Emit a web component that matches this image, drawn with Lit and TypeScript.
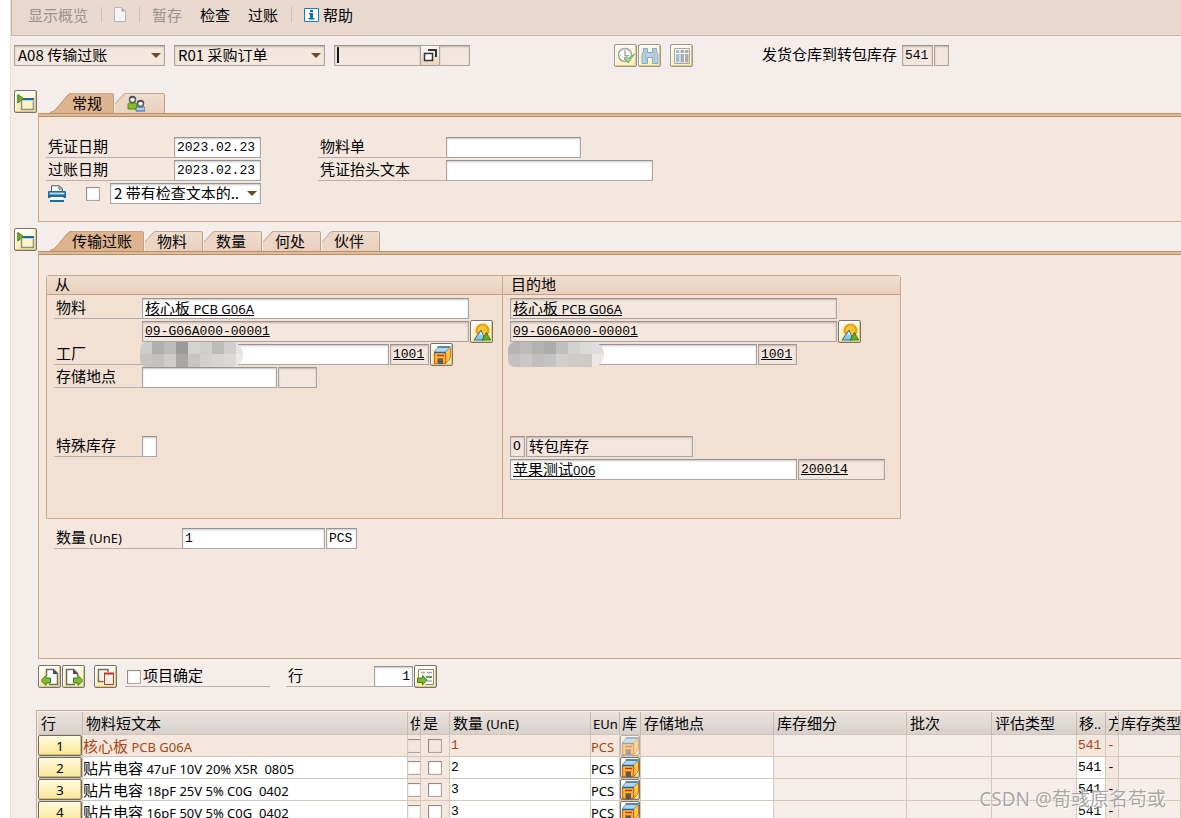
import { LitElement, html, css, svg, nothing } from "lit";
import type { TemplateResult } from "lit";
import { customElement } from "lit/decorators.js";
import { classMap } from "lit/directives/class-map.js";
import { styleMap } from "lit/directives/style-map.js";

interface FieldOptions {
  value?: string;
  label: string;
  id?: string;
  readonly?: boolean;
  link?: boolean;
  mixed?: boolean;
  right?: boolean;
  flush?: boolean;
  active?: boolean;
}

interface Item {
  no: number;
  text: string;
  qty: string;
  locked: boolean;
}

const ITEMS: Item[] = [
  { no: 1, text: "核心板 PCB G06A", qty: "1", locked: true },
  { no: 2, text: "贴片电容 47uF 10V 20% X5R  0805", qty: "2", locked: false },
  { no: 3, text: "贴片电容 18pF 25V 5% C0G  0402", qty: "3", locked: false },
  { no: 4, text: "贴片电容 16pF 50V 5% C0G  0402", qty: "3", locked: false },
];

const COLUMNS: { title: string; width: number }[] = [
  { title: "行", width: 45 },
  { title: "物料短文本", width: 325 },
  { title: "供", width: 13 },
  { title: "是", width: 29 },
  { title: "数量 (UnE)", width: 141 },
  { title: "EUn", width: 29 },
  { title: "库", width: 21 },
  { title: "存储地点", width: 133 },
  { title: "库存细分", width: 133 },
  { title: "批次", width: 85 },
  { title: "评估类型", width: 85 },
  { title: "移..", width: 29 },
  { title: "方", width: 13 },
  { title: "库存类型", width: 0 },
];

/* Latin runs are set smaller than the Chinese text around them. */
const mixed = (text: string) =>
  text
    .split(/([\x20-\x7e]+)/)
    .filter((part) => part !== "")
    .map((part) =>
      /^[\x20-\x7e]+$/.test(part) ? html`<span class="latin">${part}</span>` : part
    );

/* A field shows a number of fixed-width characters plus its frame. */
const charWidth = (chars: number) => styleMap({ width: `${chars * 8 + 7}px` });

const icon = (size: number, body: unknown) =>
  html`<svg width=${size} height=${size} viewBox="0 0 18 18" aria-hidden="true">${body}</svg>`;

const ICONS = {
  toggle: svg`
    <path d="M4.500 6.500h12v10h-12z" fill="#fdf3c4" stroke="#8b8f95" stroke-width="1.500"/>
    <path d="M4 7.500h13" stroke="#b9d6e8"/>
    <path d="M4 6h13" stroke="#1c6a9c" stroke-width="2"/>
    <path d="M.800 1.500l5.700 4-5.700 4.500z" fill="#6fb52c" stroke="#3d7a1c"/>`,
  people: svg`
    <path d="M1 14V9.500q0-1.500 1.500-1.500h6Q10 8 10 9.500V14z" fill="#86bd2d" stroke="#4e8a17"/>
    <circle cx="5.500" cy="4.500" r="3" fill="#fff" stroke="#595959" stroke-width="1.500"/>
    <path d="M2.500 4q0-3 3-3t3 3q-3-2-6 0z" fill="#555"/>
    <path d="M9 16v-2.500q0-1.500 1.500-1.500h6q1.500 0 1.500 1.500V16z" fill="#a9cdec" stroke="#2d6fa5"/>
    <circle cx="13.500" cy="8.500" r="3" fill="#fff" stroke="#595959" stroke-width="1.500"/>
    <path d="M10.500 8q0-3 3-3t3 3q-3-2-6 0z" fill="#555"/>`,
  clock: svg`
    <circle cx="8" cy="8" r="6.500" fill="#fff" stroke="#a3a7ab" stroke-width="1.500"/>
    <path d="M8 3v5.500h4M8 12v1M3 8h1" fill="none" stroke="#9a9ea2" stroke-width="1.200"/>
    <path d="M7 11l4 5 6.500-9-6 4.500-1.500-2z" fill="#a5cf8a" stroke="#74a95c"/>`,
  binoculars: svg`
    <path d="M2.500 1.500h4v4h5v-4h4v3l1.500 3v9h-5.500v-6h-5v6H1v-9l1.500-3z" fill="#bad0e3" stroke="#86a9c6"/>
    <path d="M4.500 3v12M13.500 3v12" stroke="#a3c0d9" stroke-width="1.500"/>`,
  layout: svg`
    <path d="M1.500 1.500h15v15h-15z" fill="#fff" stroke="#a5a5a8"/>
    <path d="M3 3h3.500v3H3zM3 7h3.500v8.500H3z" fill="#9fc0d8"/>
    <path d="M7.500 3H11v3H7.500zM12 3h3.500v3H12zM7.500 7H11v8.500H7.500zM12 7h3.500v8.500H12z" fill="#a9a9ae"/>`,
  printer: svg`
    <path d="M3.500 7V.800h7.500l3.500 3V7z" fill="#fff" stroke="#555"/>
    <path d="M11 1v3h3" fill="none" stroke="#555"/>
    <path d="M1 6h16q1 0 1 1v6H0V7q0-1 1-1z" fill="#1b6c9f"/>
    <path d="M1.500 7.500h15v2h-15z" fill="#b2d2ec"/>
    <path d="M13 8h2v1h-2z" fill="#fff"/>
    <path d="M2.500 12h13v2.500h-13z" fill="#fff"/>
    <path d="M2 15h14v2H2z" fill="#1b6c9f"/>`,
  picture: svg`
    <circle cx="9.500" cy="7.500" r="6" fill="#ffc629" stroke="#f09a1a" stroke-width="2"/>
    <path d="M1 17L8 7l4 10z" fill="#8fc3e4" stroke="#2b70a3"/>
    <path d="M8 8.500l-2 4 2-1 2 2z" fill="#dff0fb"/>
    <path d="M9 17l4.500-7.500 4 7.500z" fill="#5eae28" stroke="#37801b"/>`,
  plant: svg`
    <path d="M12.500 6L17 1.500V12l-4.500 5.500z" fill="#ffc83d"/>
    <path d="M17.500 2v9q-.500 3-5 6.500" fill="none" stroke="#e0641c"/>
    <path d="M1 6.500h12V17.500H1z" fill="#ffc233"/>
    <path d="M1.500 7v10.500M12.500 7v10.500M1 17.500h3M10 17.500h3" stroke="#e0641c" stroke-width="1.500"/>
    <path d="M1 6L5 1.500h12L12.500 6z" fill="#b7d5ea"/>
    <path d="M4.500 1h13M1 6.500h12" stroke="#1f6798" stroke-width="1.500"/>
    <path d="M1 6l4-4.500M12.500 6L17 1.500" stroke="#5b94ba"/>
    <path d="M4 9.500h7" stroke="#c22a1b" stroke-width="1.500"/>
    <path d="M4 12.500h6.500" stroke="#e0641c"/>
    <path d="M4.500 13h5.500v5H4.500z" fill="#5a5a5a"/>`,
  prev: svg`
    <path d="M5.500 8V1.500h7l4 4v11H8" fill="#fff" stroke="#6a6a6a" stroke-width="1.500"/>
    <path d="M12 1l5 5h-5z" fill="#4b4b4b"/>
    <path d="M0 12.500l5-5V10h4.500v5H5v2.500z" fill="#7cbb32" stroke="#3a7d22"/>`,
  next: svg`
    <path d="M10 16.500H1.500v-15h7l4 4V8" fill="#fff" stroke="#6a6a6a" stroke-width="1.500"/>
    <path d="M8 1l5 5H8z" fill="#4b4b4b"/>
    <path d="M18 12.500l-5-5V10H8.500v5H13v2.500z" fill="#7cbb32" stroke="#3a7d22"/>`,
  copy: svg`
    <path d="M1 1.500h10M1.500 1v12.500h5M11 1v3" fill="none" stroke="#6c6c6c" stroke-width="1.500"/>
    <path d="M2.500 3H10v9.500H2.500z" fill="#f6f2ea"/>
    <path d="M7.500 5.500h9v11h-9z" fill="#f3ede8" stroke="#b4342a"/>
    <path d="M7 5.500h10" stroke="#b4342a" stroke-width="2"/>`,
  goto: svg`
    <path d="M1.500 9V1.500h15v15h-8" fill="#fff" stroke="#8a8a8a"/>
    <path d="M4 4.500h4M10 4.500h5M10 13h5" stroke="#aaa" stroke-width="1.500"/>
    <path d="M9 9h6" stroke="#3a7d22" stroke-width="1.500"/>
    <path d="M10 12L5.500 7.500V10H.500v4.500h5V17z" fill="#7cbb32" stroke="#3a7d22"/>`,
};

/* Grey levels of the blocks that cover the plant names. */
const MASK_FROM = [
  ["#cfcdcc", "#afafaf", "#bcbcbc", "#9c9b9b", "#d5d4d3", "#cfcecd", "#bdbbba", "#cfcdcd", "#e6e4e3"],
  ["#c8c4c2", "#c3c0be", "#cfcccb", "#a8a7a6", "#c6c5c4", "#d3d0cf", "#d6d3d1", "#dcdad8", "#eceae9"],
];
const MASK_TO = [
  ["#b6b4b4", "#bdbcbb", "#b2b1b1", "#adacac", "#c0bfbf", "#d4d2d1", "#dadad9", "#e0dedd"],
  ["#c3c0bf", "#c9c6c5", "#c1bfbe", "#c6c4c3", "#d2d0cf", "#cfcac8", "#cdc9c7", "#e9e6e4"],
];

@customElement("app-root")
export class AppRoot extends LitElement {
  static styles = css`
    :host {
      display: block;
      height: 100vh;
      overflow: hidden;
      position: relative;
      background: #fff;
      color: #000;
      font: 15px/20px "Noto Sans CJK SC", sans-serif;
      --cjk: "Noto Sans CJK SC", sans-serif;
      --latin: "Noto Sans", "Noto Sans CJK SC", sans-serif;
      --mono: "Liberation Mono", "Noto Sans CJK SC", monospace;
      --rule: #b5b1b1;
      --edge: #cba98a;
      --panel: #f4e8de;
    }
    *, *::before { box-sizing: border-box; }
    button, input, select { margin: 0; color: inherit; outline: none; border-radius: 0; }
    svg { display: block; flex: none; }
    .latin { font-family: var(--latin); font-size: 13px; line-height: 13px; white-space: pre; }
    .page {
      min-height: 100%;
      margin-left: 10px;
      border-left: 1px solid #e9dfda;
      background: #f5edea;
    }

    .toolbar {
      display: flex;
      align-items: center;
      height: 36px;
      padding: 0 0 6px 16px;
      border-left: 1px solid #c9b1a3;
      border-bottom: 1px solid #c9b1a3;
      background: #e8d8ce;
    }
    .command { padding: 0; border: 0; background: none; font: 15px/20px var(--cjk); display: flex; align-items: center; gap: 4px; }
    .command:disabled { color: #9c938d; }
    .command + .command { margin-left: 18px; }
    .command.after { margin-left: 12px; }
    .divider { width: 1px; height: 15px; margin-left: 13px; background: #d9b9a2; }

    .head { display: flex; align-items: flex-start; padding: 9px 0 0 3px; height: 54px; }
    .field {
      flex: none;
      height: 21px;
      padding: 0 2px;
      border: 1px solid #aaa6a5;
      border-top-color: #979393;
      background-color: #fff;
      box-shadow: inset 0 1px 2px #c9c7c7;
      font: 13px/18px var(--mono);
    }
    .field.locked { background-color: var(--panel); box-shadow: inset 0 1px 2px #c0b4ad; }
    .field.link { text-decoration: underline; }
    .field.mixed { padding-bottom: 3px; font: 15px/17px var(--cjk); }
    a.field { display: block; color: inherit; white-space: nowrap; overflow: hidden; }
    .field.right { text-align: right; }
    .field.flush { margin-left: -1px; }
    .field.active {
      background-image: linear-gradient(#101820, #101820);
      background-size: 2px 16px;
      background-position: 2px 1px;
      background-repeat: no-repeat;
    }
    select.field {
      appearance: none;
      padding: 0 20px 3px 3px;
      font: 15px/17px var(--cjk);
      background-image: url("data:image/svg+xml,%3Csvg xmlns='http://www.w3.org/2000/svg' width='10' height='6'%3E%3Cpath d='M0 0h10L5 5z' fill='%236b4d26'/%3E%3C/svg%3E");
      background-repeat: no-repeat;
      background-position: right 3px center;
    }
    .line { display: flex; gap: 1px; }
    .head .shift { margin-left: 9px; }
    .line.joined { gap: 0; }
    .match {
      width: 20px; height: 21px; padding: 3px 2px; margin-left: -1px;
      border: 1px solid #a5a09d; background: linear-gradient(#fbf7f3, #ecd3b8);
    }
    .tools { display: flex; gap: 1px; margin: -1px 0 0 144px; }
    .movement { display: flex; gap: 5px; margin-left: 69px; line-height: 18px; }
    .tool {
      flex: none;
      display: grid; place-items: center;
      width: 23px; height: 23px; padding: 0;
      border: 1px solid #77736a; border-radius: 2px;
      background: linear-gradient(#fffef4, #fbeb9f);
      box-shadow: inset -1px -1px 0 #d8ca86, inset 1px 1px 0 #fff;
    }
    .tool:disabled { border-color: #9c968f; background: linear-gradient(#fcf9ee, #fdf0b8); }
    .tool.apart { margin-left: 8px; }

    .strip { display: flex; align-items: flex-start; padding-left: 3px; height: 23px; }
    .tabs { display: flex; padding: 3px 0 0 13px; height: 23px; }
    .tab { display: flex; padding: 0; border: 0; background: none; height: 20px; font: 15px/20px var(--cjk); }
    .tab .face {
      height: 20px; padding: 0 15px 0 1px;
      border-top: 1px solid #c9a98d; border-right: 1px solid #c0a184; border-top-right-radius: 2px;
      background: linear-gradient(#eedccd, #e9cfbc);
      line-height: 17px;
    }
    .tab .face.wide { padding: 1px 19px 0 1px; }
    .tab.on .face { padding-right: 11px; background: #ddb48e; }
    .tab + .tab { margin-left: 1px; }
    .panel {
      margin-left: 27px;
      border-left: 1px solid var(--edge);
      border-bottom: 1px solid var(--edge);
      background: var(--panel);
    }
    .panel::before { content: ""; display: block; height: 4px; margin-left: -1px; background: #e0bc96; border-top: 1px solid #b98e66; border-bottom: 1px solid #b98e66; border-top-left-radius: 2px; }
    .panel.general { height: 109px; margin-bottom: 6px; }
    .panel.detail { height: 408px; }

    .general-grid { display: flex; gap: 57px; padding: 20px 0 0 7px; }
    .stack { display: flex; flex-direction: column; gap: 2px; }
    .row { display: flex; height: 21px; gap: 1px; }
    .row label, .row .caption {
      flex: none; width: 128px; padding-left: 2px; border-bottom: 1px solid var(--rule); line-height: 18px;
    }
    .row .lead { display: flex; }
    .group .row label, .group .row .caption { width: 88px; }
    .group .row .blank { width: 88px; flex: none; }
    .row.gap { margin-top: 46px; }
    .row .tool { margin: -1px 0; }
    .print { align-items: center; }
    .print svg { margin-left: 2px; }
    .check {
      appearance: none; flex: none; width: 14px; height: 14px;
      border: 1px solid #8f8b8b; border-right-color: #a9a5a5; border-bottom-color: #a9a5a5; border-radius: 1px; background: #fff;
      box-shadow: inset 0 0 2px #d8d6d6;
    }
    .check.locked { background: var(--panel); }
    .print .check { margin: 1px 9px 0 19px; }

    .group {
      display: grid; grid-template-columns: 455px 398px;
      width: 855px; margin: 20px 0 0 7px;
      border: 1px solid var(--edge); border-radius: 3px 3px 0 0;
      background: #f2e1d3;
    }
    .group section { height: 242px; }
    .group section + section { border-left: 1px solid var(--edge); }
    .group h2 {
      margin: 0; height: 19px; padding-left: 8px; border-bottom: 1px solid #c6a080;
      background: linear-gradient(#efdecf, #e9cfbc);
      font: 15px/15px var(--cjk);
    }
    .group .stack { padding: 3px 7px; }
    .covered { position: relative; flex: none; }
    .covered .field { display: block; }
    .mask { position: absolute; left: -2px; top: -2px; max-width: 103px; overflow: hidden; border-radius: 7px 12px 12px 7px; }
    .mask-row { display: flex; }
    .mask-row i { flex: none; width: 12px; height: 12px; }
    .mask-row:last-child i { height: 13px; }
    .quantity { padding: 9px 0 0 15px; }

    .item-tools { display: flex; align-items: flex-start; gap: 1px; padding: 6px 0 0 27px; height: 51px; }
    .confirm { display: flex; align-items: flex-start; gap: 2px; width: 145px; height: 21px; margin: 1px 15px 0 7px; padding-left: 2px; border-bottom: 1px solid var(--rule); line-height: 18px; }
    .confirm .check { margin-top: 4px; }
    .jump { display: flex; gap: 0; margin-top: 1px; }
    .jump label { width: 88px; height: 21px; padding-left: 2px; border-bottom: 1px solid var(--rule); line-height: 18px; }
    .jump .tool { margin: -1px 0 0 1px; }

    .grid-frame { margin-left: 25px; padding: 1px 0 0 1px; border-top: 1px solid var(--edge); border-left: 1px solid var(--edge); }
    table { width: 100%; table-layout: fixed; border-collapse: separate; border-spacing: 0; }
    th, td { padding: 0; overflow: hidden; white-space: nowrap; text-align: left; }
    th {
      height: 23px; padding-left: 3px; border-right: 1px solid #c3bbb5; border-bottom: 1px solid #cfc5bd;
      background: linear-gradient(#e9e2dd, #d8d1cb);
      font: 15px/20px var(--cjk);
    }
    th.narrow { padding-left: 2px; }
    td { height: 22px; border-right: 1px solid #d3c7be; border-bottom: 1px solid #d3c7be; line-height: 19px; }
    td.open { background: #fff; }
    td.tint, tr.locked td.open { background: var(--panel); }
    td .check { display: block; margin: 1px auto 0; }
    td.cut .check { margin: 1px 0 0 -1px; }
    td.num { font-family: var(--mono); font-size: 13px; padding-left: 1px; }
    tr.locked { color: #ab4410; }
    .line-no {
      display: block; width: 44px; height: 21px; padding: 0;
      border: 1px solid #6d6a66; border-radius: 2px;
      background: linear-gradient(#fffbe0, #fbe795);
      box-shadow: inset -1px -1px 0 #d0bd73;
      color: #000; font: 13px/18px var(--latin);
    }
    td .tool { width: 20px; height: 21px; }
    tr.locked .tool { opacity: 0.5; }

    .watermark {
      position: absolute; right: 15px; bottom: 6px;
      color: #aaa5a3; text-shadow: 0 0 1px #fff, 1px 1px 1px #fff;
      font: 19px/26px "Noto Sans", "Noto Sans CJK SC", sans-serif;
    }
  `;

  private field(chars: number, o: FieldOptions) {
    return html`<input
      type="text"
      class=${classMap({
        field: true,
        locked: !!o.readonly,
        link: !!o.link,
        mixed: !!o.mixed,
        right: !!o.right,
        flush: !!o.flush,
        active: !!o.active,
      })}
      style=${charWidth(chars)}
      id=${o.id ?? nothing}
      aria-label=${o.id ? nothing : o.label}
      .value=${o.value ?? ""}
      ?readonly=${!!o.readonly}
    />`;
  }

  private hotspot(chars: number, value: string, label: string, locked = false) {
    return html`<a
      href="#"
      class=${classMap({ field: true, mixed: true, link: true, locked })}
      style=${charWidth(chars)}
      aria-label="${label}: ${value}"
      >${mixed(value)}</a
    >`;
  }

  private tool(label: string, body: unknown, extra = "", disabled = false) {
    return html`<button type="button" class="tool ${extra}" aria-label=${label} ?disabled=${disabled}>${icon(18, body)}</button>`;
  }

  private tab(label: string | TemplateResult, on: boolean, name = "") {
    const wide = name !== "";
    return html`<button type="button" role="tab" aria-selected=${on ? "true" : "false"} aria-label=${name || nothing} class="tab ${on ? "on" : ""}">
      ${on
        ? html`<svg width="21" height="20" viewBox="0 0 21 20" aria-hidden="true">
            <path d="M0 20Q4 19 7 15L17 3Q19 .500 21 .500V20z" fill="#ddb48e" />
            <path d="M0 19.500Q4 19 7 15L17 3Q19 .500 21 .500" fill="none" stroke="#b98e66" />
          </svg>`
        : html`<svg width="11" height="20" viewBox="0 0 11 20" aria-hidden="true">
            <path d="M0 11L8 2Q9 .500 11 .500V20H0z" fill="#ebd5c4" />
            <path d="M0 11L8 2Q9 .500 11 .500" fill="none" stroke="#c0a184" />
          </svg>`}
      <span class="face ${wide ? "wide" : ""}">${label}</span>
    </button>`;
  }

  private mask(rows: string[][]) {
    return html`<span class="mask" aria-hidden="true">
      ${rows.map(
        (r) => html`<span class="mask-row">${r.map((c) => html`<i style=${styleMap({ background: c })}></i>`)}</span>`
      )}
    </span>`;
  }

  private renderToolbar() {
    return html`<header class="toolbar">
      <button type="button" class="command" disabled>显示概览</button>
      <span class="divider"></span>
      <button type="button" class="command after" aria-label="新建" disabled>
        <svg width="12" height="15" viewBox="0 0 12 15" aria-hidden="true">
          <path d="M.500 .500h7l4 4v10H.500z" fill="#f4f4f4" stroke="#b7b7b9" />
          <path d="M7.500 .500v4h4z" fill="#a9a9ad" />
        </svg>
      </button>
      <span class="divider"></span>
      <button type="button" class="command after" disabled>暂存</button>
      <button type="button" class="command">检查</button>
      <button type="button" class="command">过账</button>
      <span class="divider"></span>
      <button type="button" class="command after">
        <svg width="15" height="14" viewBox="0 0 15 14" aria-hidden="true">
          <path d="M.500 .500h14v13H.500z" fill="#fff" stroke="#1b7dbb" />
          <path d="M6 2h3v2H6zM5 5h4v5h1.500v1.500h-6V10H6V6.500H5z" fill="#0f6ead" />
        </svg>
        帮助
      </button>
    </header>`;
  }

  private renderHead() {
    return html`<div class="head">
      <select class="field locked" aria-label="业务" style=${charWidth(18)}><option>A08 传输过账</option></select>
      <select class="field locked shift" aria-label="参考凭证" style=${charWidth(18)}><option>R01 采购订单</option></select>
      <div class="line joined shift">
        ${this.field(10, { label: "采购订单", readonly: true, active: true })}
        <button type="button" class="match" aria-label="搜索帮助">
          <svg width="14" height="13" viewBox="0 0 14 13" aria-hidden="true">
            <path d="M5 1h8v7" fill="none" stroke="#33333c" stroke-width="2" />
            <path d="M1.500 4.500h8v7h-8z" fill="#fff" stroke="#33333c" stroke-width="1.500" />
          </svg>
        </button>
        ${this.field(3, { label: "项目", readonly: true, flush: true })}
      </div>
      <div class="tools">
        ${this.tool("执行", ICONS.clock, "", true)} ${this.tool("查找", ICONS.binoculars, "", true)}
        ${this.tool("布局", ICONS.layout, "apart", true)}
      </div>
      <div class="movement">
        <label for="movement">发货仓库到转包库存</label>
        <div class="line">
          ${this.field(3, { id: "movement", label: "移动类型", value: "541", readonly: true })}
          ${this.field(1, { label: "特殊库存标识", readonly: true })}
        </div>
      </div>
    </div>`;
  }

  private renderGeneral() {
    return html`<div class="strip">
        ${this.tool("收起抬头", ICONS.toggle)}
        <div class="tabs" role="tablist">
          ${this.tab("常规", true)} ${this.tab(icon(18, ICONS.people), false, "伙伴")}
        </div>
      </div>
      <div class="panel general">
        <div class="general-grid">
          <div class="stack">
            <div class="row"><span class="lead"><label for="doc-date">凭证日期</label>${this.field(10, { id: "doc-date", label: "", value: "2023.02.23" })}</span></div>
            <div class="row"><span class="lead"><label for="post-date">过账日期</label>${this.field(10, { id: "post-date", label: "", value: "2023.02.23" })}</span></div>
            <div class="row print">
              ${icon(18, ICONS.printer)}
              <input type="checkbox" class="check" aria-label="打印" />
              <select class="field" aria-label="打印版本" style=${charWidth(18)}><option>2 带有检查文本的...</option></select>
            </div>
          </div>
          <div class="stack">
            <div class="row"><span class="lead"><label for="slip">物料单</label>${this.field(16, { id: "slip", label: "" })}</span></div>
            <div class="row"><span class="lead"><label for="head-text">凭证抬头文本</label>${this.field(25, { id: "head-text", label: "" })}</span></div>
          </div>
        </div>
      </div>`;
  }

  private renderDetail() {
    return html`<div class="strip">
        ${this.tool("收起明细", ICONS.toggle)}
        <div class="tabs" role="tablist">
          ${this.tab("传输过账", true)} ${["物料", "数量", "何处", "伙伴"].map((t) => this.tab(t, false))}
        </div>
      </div>
      <div class="panel detail">
        <div class="group">
          <section>
            <h2>从</h2>
            <div class="stack">
              <div class="row">
                <span class="lead"><span class="caption">物料</span>${this.hotspot(40, "核心板 PCB G06A", "物料")}</span>
              </div>
              <div class="row">
                <span class="lead"><span class="blank"></span>${this.field(40, { label: "物料编号", value: "09-G06A000-00001", link: true, readonly: true })}</span>
                ${this.tool("物料图片", ICONS.picture)}
              </div>
              <div class="row">
                <span class="lead"><label for="plant">工厂</label><span class="covered">${this.field(30, { id: "plant", label: "" })}${this.mask(MASK_FROM)}</span></span>
                ${this.field(4, { label: "工厂代码", value: "1001", link: true, readonly: true })}
                ${this.tool("工厂", ICONS.plant)}
              </div>
              <div class="row">
                <span class="lead"><label for="sloc">存储地点</label>${this.field(16, { id: "sloc", label: "" })}</span>
                ${this.field(4, { label: "存储地点代码", readonly: true })}
              </div>
              <div class="row gap">
                <span class="lead"><label for="special">特殊库存</label>${this.field(1, { id: "special", label: "" })}</span>
              </div>
            </div>
          </section>
          <section>
            <h2>目的地</h2>
            <div class="stack">
              <div class="row">${this.hotspot(40, "核心板 PCB G06A", "目的地物料", true)}</div>
              <div class="row">
                ${this.field(40, { label: "目的地物料编号", value: "09-G06A000-00001", link: true, readonly: true })}
                ${this.tool("目的地物料图片", ICONS.picture)}
              </div>
              <div class="row">
                <span class="covered">${this.field(30, { label: "目的地工厂" })}${this.mask(MASK_TO)}</span>
                ${this.field(4, { label: "目的地工厂代码", value: "1001", link: true, readonly: true })}
              </div>
              <div class="row"></div>
              <div class="row gap">
                ${this.field(1, { label: "库存标识", value: "O", readonly: true })}
                ${this.field(20, { label: "库存类型", value: "转包库存", mixed: true, readonly: true })}
              </div>
              <div class="row">
                ${this.hotspot(35, "苹果测试006", "供应商")}
                ${this.field(10, { label: "供应商编号", value: "200014", link: true, readonly: true })}
              </div>
            </div>
          </section>
        </div>
        <div class="quantity">
          <div class="row">
            <span class="lead"><label for="qty">${mixed("数量 (UnE)")}</label>${this.field(17, { id: "qty", label: "", value: "1" })}</span>
            ${this.field(3, { label: "单位", value: "PCS" })}
          </div>
        </div>
      </div>`;
  }

  private renderItemTools() {
    return html`<div class="item-tools">
      ${this.tool("上一项目", ICONS.prev)} ${this.tool("下一项目", ICONS.next)} ${this.tool("复制", ICONS.copy, "apart")}
      <label class="confirm"><input type="checkbox" class="check" />项目确定</label>
      <div class="jump">
        <label for="line">行</label>${this.field(4, { id: "line", label: "", value: "1", right: true })}${this.tool("转到行", ICONS.goto)}
      </div>
    </div>`;
  }

  private renderItems() {
    return html`<div class="grid-frame">
      <table>
        <colgroup>
          ${COLUMNS.map((c) => html`<col style=${styleMap({ width: c.width ? `${c.width}px` : "auto" })} />`)}
        </colgroup>
        <thead>
          <tr>
            ${COLUMNS.map((c) => html`<th scope="col" class=${c.width < 30 ? "narrow" : ""}>${mixed(c.title)}</th>`)}
          </tr>
        </thead>
        <tbody>
          ${ITEMS.map((it) => {
            const box = `check ${it.locked ? "locked" : ""}`;
            return html`<tr class=${it.locked ? "locked" : ""}>
              <td><button type="button" class="line-no">${it.no}</button></td>
              <td class="open">${mixed(it.text)}</td>
              <td class="tint cut"><input type="checkbox" class=${box} aria-label="供 ${it.no}" ?disabled=${it.locked} /></td>
              <td class="tint"><input type="checkbox" class=${box} aria-label="是 ${it.no}" ?disabled=${it.locked} /></td>
              <td class="open num">${it.qty}</td>
              <td class="open">${mixed("PCS")}</td>
              <td class="tint">${this.tool(`库存 ${it.no}`, ICONS.plant)}</td>
              <td class="open"></td>
              <td></td>
              <td></td>
              <td></td>
              <td class="open num">541</td>
              <td class="tint num">-</td>
              <td></td>
            </tr>`;
          })}
        </tbody>
      </table>
    </div>`;
  }

  render() {
    return html`<main class="page">
        ${this.renderToolbar()} ${this.renderHead()} ${this.renderGeneral()} ${this.renderDetail()}
        ${this.renderItemTools()} ${this.renderItems()}
      </main>
      <div class="watermark">CSDN @荀彧原名苟或</div>`;
  }
}
